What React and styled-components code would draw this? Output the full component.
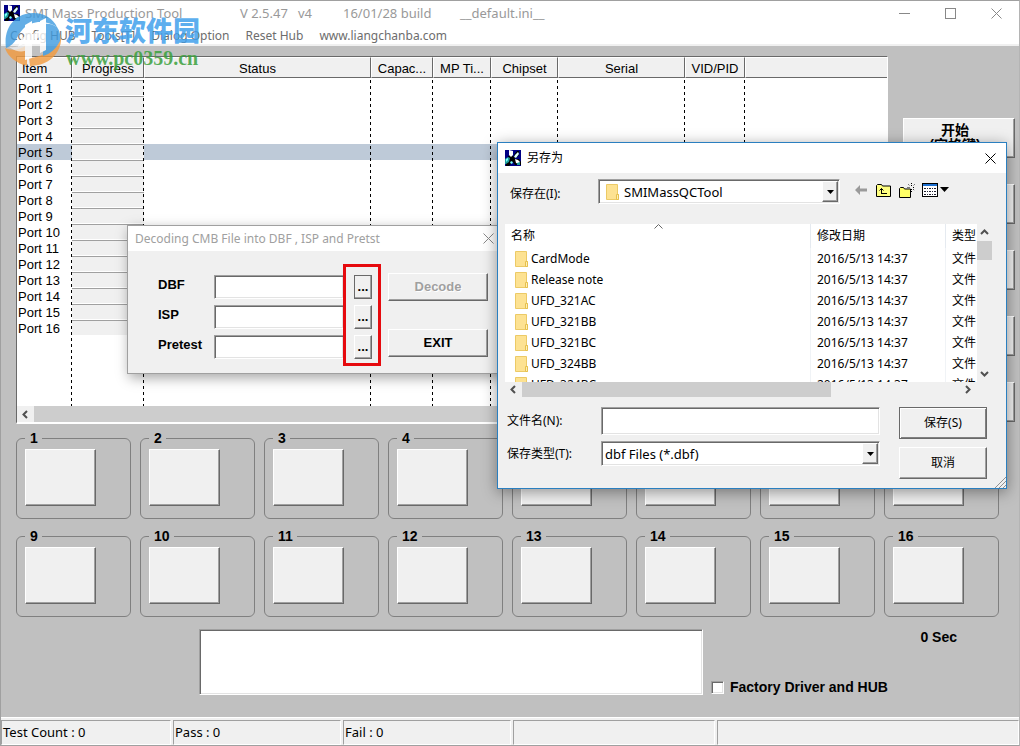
import React from "react";
import styled, { createGlobalStyle, css } from "styled-components";

const GlobalStyle = createGlobalStyle`
  *, *::before, *::after { box-sizing: border-box; }
  body { margin: 0; background: #c0c0c0; }
  button, input, select, textarea { font: inherit; color: inherit; margin: 0; border-radius: 0; outline: none; }
`;

const uiFont = `"Noto Sans", "Noto Sans CJK SC", sans-serif`;
const sysFont = `"Liberation Sans", "Noto Sans CJK SC", sans-serif`;

const raised = css`
  background: #f0f0f0;
  border: 1px solid;
  border-color: #fff #696969 #696969 #fff;
  box-shadow: inset -1px -1px 0 #a0a0a0;
`;
const sunken = css`
  background: #fff;
  border: 1px solid;
  border-color: #a0a0a0 #fff #fff #a0a0a0;
  box-shadow: inset 1px 1px 0 #696969, inset -1px -1px 0 #e3e3e3;
`;

/* ---------- main window ---------- */
const Window = styled.div`
  position: relative;
  display: flex;
  flex-direction: column;
  min-height: 100vh;
  overflow: hidden;
  background: #c0c0c0;
  border: 1px solid #a0a0a0;
  border-right-color: #b4b4b4;
  font: 13px/16px ${sysFont};
  color: #000;
`;
const TitleBar = styled.header`
  display: flex;
  align-items: center;
  height: 24px;
  padding: 0 4px 0 3px;
  background: #fff;
  font: 13px/16px ${uiFont};
  color: #999;
`;
const TitleText = styled.h1`
  display: flex;
  flex: 1;
  margin: 0 0 0 5px;
  font: inherit;
`;
const TitlePart = styled.span`
  flex: none;
  width: ${(p) => p.$w}px;
  white-space: nowrap;
`;
const CaptionButton = styled.button`
  display: flex;
  align-items: center;
  justify-content: center;
  width: ${(p) => p.$w || 46}px;
  height: 24px;
  padding: 0;
  border: 0;
  background: transparent;
`;
const WindowButtons = styled.div`
  display: flex;
  margin-right: -4px;
`;
const MenuBar = styled.nav`
  display: flex;
  gap: 16px;
  height: 21px;
  padding: 3px 9px 0;
  background: #fff;
  border-bottom: 2px solid #f0f0f0;
  font: 12px/16px ${uiFont};
`;
const MenuItem = styled.a`
  color: #6d6d6d;
  text-decoration: none;
`;
const Workspace = styled.main`
  display: flex;
  flex-direction: column;
  padding-top: 10px;
`;
const TopArea = styled.section`
  display: flex;
  padding: 0 4px 0 15px;
`;

/* ---------- port list ---------- */
const ListFrame = styled.div`
  flex: 1;
  min-width: 0;
  background: #fff;
  border: 1px solid;
  border-color: #696969 #fff #fff #696969;
  border-bottom-width: 2px;
`;
const ListBody = styled.div`
  position: relative;
  height: 349px;
  overflow: hidden;
`;
const PortTable = styled.table`
  width: 100%;
  table-layout: fixed;
  border-collapse: separate;
  border-spacing: 0;
`;
const HeadCell = styled.th`
  height: 21px;
  padding: 2px 4px 0;
  overflow: hidden;
  white-space: nowrap;
  font-weight: 400;
  text-align: ${(p) => (p.$left ? "left" : "center")};
  background: #f0f0f0;
  border: 1px solid;
  border-color: #fff #696969 #696969 #fff;
  &:last-child { border-right: 0; }
`;
const SpacerCell = styled.td`
  height: 2px;
  padding: 0;
`;
const PortRow = styled.tr`
  background: ${(p) => (p.$selected ? "#becad8" : "transparent")};
`;
const PortCell = styled.td`
  height: 16px;
  padding: 2px 0 0 1px;
  line-height: 14px;
  white-space: nowrap;
`;
const ProgressCell = styled(PortCell)`
  background: #f0f0f0;
  border-top: 1px solid #a0a0a0;
  border-bottom: 1px solid #fff;
`;
const ColumnLines = styled.div`
  position: absolute;
  inset: 21px 0 0;
  display: flex;
  pointer-events: none;
`;
const ColumnLine = styled.span`
  flex: none;
  width: ${(p) => p.$w}px;
  background: repeating-linear-gradient(to bottom, transparent 0 2px, #000 2px 5px, transparent 5px 6px) right / 1px 100% no-repeat;
`;
const HScroll = styled.div`
  display: flex;
  height: ${(p) => p.$h}px;
  background: #f0f0f0;
`;
const ScrollButton = styled.button`
  display: flex;
  flex: none;
  align-items: center;
  justify-content: center;
  width: ${(p) => p.$w || 17}px;
  height: ${(p) => p.$h || 16}px;
  padding: 0;
  border: 0;
  background: #f0f0f0;
`;
const ScrollThumb = styled.div`
  flex: ${(p) => (p.$len ? "none" : 1)};
  ${(p) => (p.$len ? (p.$vertical ? `height: ${p.$len}px;` : `width: ${p.$len}px;`) : "")}
  background: #cdcdcd;
`;
const ScrollTrack = styled.div`
  flex: 1;
`;

/* ---------- right command column ---------- */
const Commands = styled.div`
  display: flex;
  flex-direction: column;
  gap: 26px;
  width: 112px;
  margin-left: 15px;
  padding-top: 62px;
`;
const CommandButton = styled.button`
  ${raised}
  height: 40px;
  padding: 0 8px 0 0;
  font: bold 14px/15px ${sysFont};
  white-space: pre-line;
`;

/* ---------- port tiles ---------- */
const PortGrid = styled.section`
  display: grid;
  grid-template-columns: repeat(8, 1fr);
  gap: 9px;
  padding: 6px 20px 0 15px;
`;
const PortBox = styled.fieldset`
  min-width: 0;
  height: 89px;
  margin: 0;
  padding: 3px 8px 12px;
  border: 1px solid #808080;
  border-radius: 6px;
`;
const PortLegend = styled.legend`
  padding: 0 4px 0 5px;
  font: bold 14px/16px ${sysFont};
`;
const PortTile = styled.div`
  ${raised}
  width: 71px;
  height: 57px;
`;

/* ---------- lower area ---------- */
const LowerArea = styled.section`
  display: flex;
  gap: 8px;
  padding: 12px 20px 0 198px;
`;
const LogBox = styled.textarea`
  ${sunken}
  width: 504px;
  height: 66px;
  resize: none;
`;
const LowerSide = styled.div`
  display: flex;
  flex: 1;
  flex-direction: column;
  justify-content: space-between;
  font: bold 14px/16px ${sysFont};
`;
const Timer = styled.output`
  align-self: flex-end;
  margin-right: 42px;
`;
const CheckLabel = styled.label`
  display: flex;
  align-items: center;
  gap: 6px;
  white-space: nowrap;
`;
const CheckBox = styled.input`
  ${sunken}
  appearance: none;
  width: 13px;
  height: 13px;
`;
const StatusBar = styled.footer`
  display: grid;
  grid-template-columns: 170px 168px 168px 202px 1fr;
  gap: 2px;
  margin-top: auto;
  padding-top: 2px;
  background: #f0f0f0;
  border-top: 1px solid #fff;
  font: 13px/23px ${uiFont};
`;
const StatusCell = styled.div`
  height: 25px;
  padding-left: 1px;
  border: 1px solid;
  border-color: #a0a0a0 #fff #fff #a0a0a0;
`;

/* ---------- decode dialog ---------- */
const DecodeDialog = styled.section`
  position: absolute;
  left: 126px;
  top: 224px;
  width: 382px;
  background: #f0f0f0;
  border: 1px solid #a0a0a0;
  box-shadow: 2px 4px 12px rgba(0, 0, 0, 0.35);
`;
const DialogTitle = styled.header`
  display: flex;
  align-items: center;
  justify-content: space-between;
  height: ${(p) => p.$h}px;
  padding: 0 ${(p) => p.$right}px 0 7px;
  background: #fff;
  font: 12px/16px ${uiFont};
  color: ${(p) => (p.$inactive ? "#a0a0a0" : "#000")};
`;
const DialogName = styled.h2`
  display: flex;
  align-items: center;
  gap: 6px;
  margin: 0;
  font: inherit;
`;
const DecodeBody = styled.div`
  display: flex;
  align-items: flex-start;
  padding: 13px 19px 7px 30px;
`;
const DecodeFields = styled.div`
  display: grid;
  flex: none;
  grid-template-columns: 56px 129px;
  row-gap: 6px;
  padding-top: 11px;
`;
const FieldLabel = styled.label`
  font: bold 13px/20px ${sysFont};
`;
const PathInput = styled.input`
  ${sunken}
  width: 129px;
  height: 24px;
  border-right: 0;
`;
const BrowseFrame = styled.div`
  display: flex;
  flex: none;
  flex-direction: column;
  gap: 6px;
  width: 38px;
  padding: 8px 6px 4px 8px;
  border: 3px solid #e60a0e;
`;
const BrowseButton = styled.button`
  ${raised}
  width: 18px;
  height: 24px;
  padding: 0;
  font: bold 13px/16px ${sysFont};
  ${(p) => p.$active && css`border-color: #696969;`}
`;
const DecodeActions = styled.div`
  display: flex;
  flex: none;
  flex-direction: column;
  gap: 28px;
  padding: 9px 0 0 7px;
`;
const ActionButton = styled.button`
  ${raised}
  width: 100px;
  height: 28px;
  padding: 0;
  font: bold 13px/16px ${sysFont};
  &:disabled { color: #a0a0a0; text-shadow: 1px 1px 0 #fff; }
`;

/* ---------- save dialog ---------- */
const SaveDialog = styled.section`
  position: absolute;
  left: 496px;
  top: 141px;
  width: 510px;
  background: #f0f0f0;
  border: 1px solid #2a7fc0;
  box-shadow: 0 3px 14px rgba(0, 0, 0, 0.4);
  font: 12px/16px ${uiFont};
`;
const LocationRow = styled.div`
  display: flex;
  align-items: center;
  padding: 6px 0 0 12px;
`;
const RowLabel = styled.label`
  flex: none;
  width: ${(p) => p.$w}px;
  white-space: nowrap;
`;
const LocationLabel = styled(RowLabel)`
  padding-top: 4px;
`;
const Combo = styled.div`
  ${sunken}
  display: flex;
  align-items: center;
  gap: 5px;
  width: ${(p) => p.$w}px;
  height: 25px;
  padding: 1px 1px 1px ${(p) => p.$pad}px;
`;
const ComboSelect = styled.select`
  appearance: none;
  flex: 1;
  min-width: 0;
  padding: 0;
  border: 0;
  background: transparent;
  font-size: 13px;
`;
const ComboArrow = styled.span`
  ${raised}
  display: flex;
  align-items: center;
  justify-content: center;
  align-self: stretch;
  width: 16px;
  pointer-events: none;
`;
const ToolButtons = styled.div`
  display: flex;
  gap: 7px;
  margin: -3px 0 0 15px;
`;
const ToolButton = styled.button`
  display: flex;
  padding: 0;
  border: 0;
  background: transparent;
`;
const FileArea = styled.div`
  margin: 20px 14px 0 7px;
`;
const FileView = styled.div`
  display: flex;
  height: 158px;
  overflow: hidden;
`;
const FileTable = styled.table`
  flex: 1;
  align-self: flex-start;
  table-layout: fixed;
  width: 100%;
  background: #fff;
  border-collapse: separate;
  border-spacing: 0;
`;
const FileHead = styled.th`
  position: relative;
  height: 24px;
  padding: 0 0 0 6px;
  font-weight: 400;
  text-align: left;
  white-space: nowrap;
  overflow: hidden;
  & + & { border-left: 1px solid #e5eaf0; }
`;
const SortMark = styled.span`
  position: absolute;
  left: 50%;
  top: 0;
  margin-left: -4px;
  line-height: 0;
`;
const FileCell = styled.td`
  height: 21px;
  padding: 0 0 0 6px;
  white-space: nowrap;
  overflow: hidden;
  & + & { border-left: 1px solid #f0f3f6; }
`;
const FileName = styled.span`
  display: flex;
  align-items: center;
  gap: 3px;
  height: 21px;
  padding-left: 4px;
`;
const VScroll = styled.div`
  display: flex;
  flex: none;
  flex-direction: column;
  width: 15px;
`;
const SaveForm = styled.div`
  display: grid;
  grid-template-columns: 373px 107px;
  padding: 10px 0 9px 9px;
`;
const SaveFields = styled.div`
  display: grid;
  grid-template-columns: 94px 279px;
  align-content: start;
  align-items: center;
  row-gap: 6px;
`;
const NameInput = styled.input`
  ${sunken}
  width: 279px;
  height: 28px;
`;
const SaveActions = styled.div`
  display: flex;
  flex-direction: column;
  gap: 8px;
  margin-left: 19px;
`;
const SaveButton = styled.button`
  ${raised}
  width: 88px;
  height: 32px;
  padding: 0;
  ${(p) => p.$default && css`border-color: #696969; box-shadow: inset 1px 1px 0 #fff, inset -1px -1px 0 #808080;`}
`;
const Grip = styled.span`
  position: absolute;
  right: 0;
  bottom: 0;
  line-height: 0;
`;

/* ---------- site mark ---------- */
const SiteMark = styled.div`
  position: absolute;
  left: 3px;
  top: 11px;
  display: flex;
  align-items: flex-start;
  pointer-events: none;
`;
const SiteText = styled.div`
  display: flex;
  flex-direction: column;
  margin-left: 3px;
  padding-top: 2px;
`;
const SiteName = styled.span`
  font: 900 27px/32px "Noto Sans CJK SC", sans-serif;
  color: rgba(64, 160, 236, 0.85);
`;
const SiteUrl = styled.span`
  padding-left: 1px;
  font: bold 20px/24px "Liberation Serif", serif;
  color: rgba(58, 160, 60, 0.85);
`;

/* ---------- drawings ---------- */
const AppIcon = () => (
  <svg width="16" height="16" viewBox="0 0 16 16" aria-hidden="true">
    <rect width="16" height="16" fill="#000084" />
    <path d="M3 6l4-1 3 3-2 4-4 4H1v-3l3-4zM9 5l3-4h2v4l-3 3H9zM8 9h6l2 3v3h-6l-2-3z" fill="#000" />
    <path d="M4 0l4 1v4L6 7 4 5z" fill="#fff" />
    <path d="M13 2l1 2-3 4-2-1 1-2z" fill="#dff" />
    <path d="M0 9l3-2 2 1-1 4-3 2H0z" fill="#1f9c9c" />
    <path d="M1 9l2-1v2l-2 2zM5 12l2-1 1 2-2 1z" fill="#7ff" />
    <path d="M10 9l3 1 2 2-1 2-3-1z" fill="#fff" />
    <path d="M12 13l3-1v3h-3z" fill="#1f9c9c" />
  </svg>
);
const Cross = ({ color = "#888" }) => (
  <svg width="11" height="11" viewBox="0 0 11 11" aria-hidden="true">
    <path d="M.5.5l10 10M10.500 .5l-10 10" stroke={color} fill="none" />
  </svg>
);
const Chevron = ({ dir }) => {
  const d = { left: "M6 1L2.500 4.500 6 8", right: "M3 1l3.500 3.500L3 8", up: "M1 6l3.500-3.500L8 6", down: "M1 3l3.500 3.500L8 3" }[dir];
  return (
    <svg width="9" height="9" viewBox="0 0 9 9" aria-hidden="true">
      <path d={d} stroke="#505050" strokeWidth="2" fill="none" />
    </svg>
  );
};
const Triangle = () => (
  <svg width="7" height="4" viewBox="0 0 7 4" aria-hidden="true">
    <path d="M0 0h7L3.500 4z" fill="#000" />
  </svg>
);
const Folder = () => (
  <svg width="13" height="16" viewBox="0 0 13 16" aria-hidden="true">
    <path d="M.5.500h11v10h1v5h-12z" fill="#fde292" stroke="#ecca66" />
    <path d="M10.500 10.500h2v5h-2z" fill="#fff0b4" stroke="#e6c04e" />
  </svg>
);
const BackIcon = () => (
  <svg width="14" height="16" viewBox="0 0 14 16" aria-hidden="true">
    <path d="M0 8l5-5v3.500h7v3H5V13z" fill="#9a9a9a" />
  </svg>
);
const UpFolderIcon = () => (
  <svg width="16" height="16" viewBox="0 0 16 16" aria-hidden="true">
    <path d="M.5 14.500v-11l1-1h4l1 1.500h8v10.500z" fill="#ffff80" stroke="#000" />
    <path d="M5.500 11V6.500M3.500 8.500l2-2 2 2M5 11.500h6" stroke="#000" fill="none" />
  </svg>
);
const NewFolderIcon = () => (
  <svg width="16" height="16" viewBox="0 0 16 16" aria-hidden="true">
    <path d="M.5 15.500v-9l1-1h3l1 1.500h6v8.500z" fill="#ffff66" stroke="#000" />
    <path d="M12.500 1v3M12.500 7v3M8.500 5.500h2.500M14 5.500h2M9.500 2.500l1.500 1.500M14 7l1.500 1.500M15.500 2.500L14 4" stroke="#000" strokeDasharray="1 1" fill="none" />
  </svg>
);
const ViewIcon = () => (
  <svg width="28" height="16" viewBox="0 0 28 16" aria-hidden="true">
    <rect x=".5" y="1.500" width="15" height="13" fill="#fff" stroke="#000" />
    <rect x="1" y="2" width="14" height="2" fill="#1c6fd0" />
    <path d="M2 6.500h2M5 6.500h1M7 6.500h2M10 6.500h1M12 6.500h2M2 9.500h2M5 9.500h1M7 9.500h2M10 9.500h1M12 9.500h2M2 12.500h2M5 12.500h1M7 12.500h2M10 12.500h1M12 12.500h2" stroke="#223" />
    <path d="M18 5h9l-4.500 5z" fill="#000" />
  </svg>
);
const SiteLogo = () => (
  <svg width="58" height="56" viewBox="0 0 58 56" opacity="0.8" aria-hidden="true">
    <path d="M2 36C-1 15 12 1 29 1c12 0 20 6 24 14C42 8 28 8 19 17 12 24 13 32 2 36z" fill="#3d9be0" />
    <path d="M1 36c7 3 15 2 22-3v21C12 51 4 45 1 36z" fill="#f29a3e" />
    <path d="M57 22c2 18-11 32-31 32l-1-8c16-1 27-10 32-24z" fill="#f29a3e" />
    <path d="M53 15c3 4 4 10 3 14-4 8-10 13-17 15V12c5-1 10 0 14 3z" fill="#3d9be0" />
    <path d="M21 13l7-4v13l8-4V9l6-3v32l-6 3V25l-8 4v17l-7 2V31l-7 4 3-8 4-3z" fill="#fff" />
    <path d="M5 35c10 1 18-3 25-9-3 13-12 18-25 9z" fill="#fff" fillOpacity=".7" />
  </svg>
);

/* ---------- data ---------- */
const columns = [
  ["Item", 55], ["Progress", 72], ["Status", 227], ["Capac...", 62], ["MP Ti...", 58],
  ["Chipset", 67], ["Serial", 127], ["VID/PID", 60], ["", null],
];
const ports = Array.from({ length: 16 }, (_, i) => i + 1);
const menu = ["Config HUB", "Tools[T]", "Dialog Option", "Reset Hub", "www.liangchanba.com"];
const folders = ["CardMode", "Release note", "UFD_321AC", "UFD_321BB", "UFD_321BC", "UFD_324BB", "UFD_324BC"];
const decodeFields = ["DBF", "ISP", "Pretest"];

function PortList() {
  return (
    <ListFrame>
      <ListBody>
        <PortTable>
          <colgroup>
            {columns.map(([name, w]) => <col key={name} width={w || undefined} />)}
          </colgroup>
          <thead>
            <tr>
              {columns.map(([name], i) => <HeadCell key={name} $left={i === 0}>{name}</HeadCell>)}
            </tr>
          </thead>
          <tbody>
            <tr><SpacerCell colSpan={9} /></tr>
            {ports.map((n) => (
              <PortRow key={n} $selected={n === 5}>
                <PortCell>Port {n}</PortCell>
                <ProgressCell />
                <PortCell colSpan={7} />
              </PortRow>
            ))}
          </tbody>
        </PortTable>
        <ColumnLines>
          {columns.slice(0, 8).map(([name, w]) => <ColumnLine key={name} $w={w} />)}
        </ColumnLines>
      </ListBody>
      <HScroll $h={16}>
        <ScrollButton aria-label="Scroll left"><Chevron dir="left" /></ScrollButton>
        <ScrollThumb />
        <ScrollButton aria-label="Scroll right"><Chevron dir="right" /></ScrollButton>
      </HScroll>
    </ListFrame>
  );
}

function Decode() {
  return (
    <DecodeDialog>
      <DialogTitle $h={25} $right={14} $inactive>
        <DialogName>Decoding CMB File into DBF , ISP and Pretst</DialogName>
        <CaptionButton $w={12} aria-label="Close"><Cross /></CaptionButton>
      </DialogTitle>
      <DecodeBody>
        <DecodeFields>
          {decodeFields.map((f) => (
            <React.Fragment key={f}>
              <FieldLabel htmlFor={`path-${f}`}>{f}</FieldLabel>
              <PathInput id={`path-${f}`} />
            </React.Fragment>
          ))}
        </DecodeFields>
        <BrowseFrame>
          {decodeFields.map((f, i) => (
            <BrowseButton key={f} $active={i === 0}>...</BrowseButton>
          ))}
        </BrowseFrame>
        <DecodeActions>
          <ActionButton disabled>Decode</ActionButton>
          <ActionButton>EXIT</ActionButton>
        </DecodeActions>
      </DecodeBody>
    </DecodeDialog>
  );
}

function SaveAs() {
  return (
    <SaveDialog>
      <DialogTitle $h={30} $right={10}>
        <DialogName><AppIcon />另存为</DialogName>
        <CaptionButton $w={12} aria-label="Close"><Cross color="#000" /></CaptionButton>
      </DialogTitle>
      <LocationRow>
        <LocationLabel htmlFor="save-in" $w={88}>保存在(I):</LocationLabel>
        <Combo $w={242} $pad={7}>
          <Folder />
          <ComboSelect id="save-in"><option>SMIMassQCTool</option></ComboSelect>
          <ComboArrow><Triangle /></ComboArrow>
        </Combo>
        <ToolButtons>
          <ToolButton aria-label="Back"><BackIcon /></ToolButton>
          <ToolButton aria-label="Up one level"><UpFolderIcon /></ToolButton>
          <ToolButton aria-label="New folder"><NewFolderIcon /></ToolButton>
          <ToolButton aria-label="View"><ViewIcon /></ToolButton>
        </ToolButtons>
      </LocationRow>
      <FileArea>
        <FileView>
          <FileTable>
            <colgroup><col width="305" /><col width="135" /><col /></colgroup>
            <thead>
              <tr>
                <FileHead>名称<SortMark>
                  <svg width="9" height="5" viewBox="0 0 9 5" aria-hidden="true"><path d="M.5 4.500l4-4 4 4" stroke="#666" fill="none" /></svg>
                </SortMark></FileHead>
                <FileHead>修改日期</FileHead>
                <FileHead>类型</FileHead>
              </tr>
            </thead>
            <tbody>
              {folders.map((name) => (
                <tr key={name}>
                  <FileCell><FileName><Folder />{name}</FileName></FileCell>
                  <FileCell>2016/5/13 14:37</FileCell>
                  <FileCell>文件</FileCell>
                </tr>
              ))}
            </tbody>
          </FileTable>
          <VScroll>
            <ScrollButton $w={15} $h={17} aria-label="Scroll up"><Chevron dir="up" /></ScrollButton>
            <ScrollThumb $vertical $len={19} />
            <ScrollTrack />
            <ScrollButton $w={15} $h={17} aria-label="Scroll down"><Chevron dir="down" /></ScrollButton>
          </VScroll>
        </FileView>
        <HScroll $h={15}>
          <ScrollButton $h={15} aria-label="Scroll left"><Chevron dir="left" /></ScrollButton>
          <ScrollThumb $len={309} />
          <ScrollTrack />
          <ScrollButton $w={49} $h={15} aria-label="Scroll right"><Chevron dir="right" /></ScrollButton>
        </HScroll>
      </FileArea>
      <SaveForm>
        <SaveFields>
          <RowLabel htmlFor="file-name">文件名(N):</RowLabel>
          <NameInput id="file-name" />
          <RowLabel htmlFor="file-type">保存类型(T):</RowLabel>
          <Combo $w={279} $pad={3}>
            <ComboSelect id="file-type"><option>dbf Files (*.dbf)</option></ComboSelect>
            <ComboArrow><Triangle /></ComboArrow>
          </Combo>
        </SaveFields>
        <SaveActions>
          <SaveButton $default>保存(S)</SaveButton>
          <SaveButton>取消</SaveButton>
        </SaveActions>
      </SaveForm>
      <Grip>
        <svg width="12" height="12" viewBox="0 0 12 12" aria-hidden="true">
          <path d="M1 12L12 1M5 12l7-7M9 12l3-3" stroke="#909090" fill="none" />
        </svg>
      </Grip>
    </SaveDialog>
  );
}

export default function App() {
  return (
    <>
      <GlobalStyle />
      <Window>
        <TitleBar>
          <AppIcon />
          <TitleText>
            <TitlePart $w={215}>SMI Mass Production Tool</TitlePart>
            <TitlePart $w={58}>V 2.5.47</TitlePart>
            <TitlePart $w={45}>v4</TitlePart>
            <TitlePart $w={117}>16/01/28 build</TitlePart>
            <TitlePart $w={90}>__default.ini__</TitlePart>
          </TitleText>
          <WindowButtons>
            <CaptionButton aria-label="Minimize">
              <svg width="11" height="11" aria-hidden="true"><path d="M0 5.500h11" stroke="#888" /></svg>
            </CaptionButton>
            <CaptionButton aria-label="Maximize">
              <svg width="11" height="11" aria-hidden="true"><rect x=".5" y=".5" width="10" height="10" fill="none" stroke="#888" /></svg>
            </CaptionButton>
            <CaptionButton aria-label="Close"><Cross /></CaptionButton>
          </WindowButtons>
        </TitleBar>
        <MenuBar>
          {menu.map((m) => <MenuItem key={m} href="#">{m}</MenuItem>)}
        </MenuBar>
        <Workspace>
          <TopArea>
            <PortList />
            <Commands>
              <CommandButton>{"开始\n(空格键)"}</CommandButton>
              <CommandButton aria-label="Scan" />
              <CommandButton aria-label="Setting" />
              <CommandButton aria-label="Debug" />
              <CommandButton aria-label="Quit" />
            </Commands>
          </TopArea>
          <PortGrid>
            {ports.map((n) => (
              <PortBox key={n}>
                <PortLegend>{n}</PortLegend>
                <PortTile />
              </PortBox>
            ))}
          </PortGrid>
          <LowerArea>
            <LogBox aria-label="Log" />
            <LowerSide>
              <Timer>0 Sec</Timer>
              <CheckLabel><CheckBox type="checkbox" />Factory Driver and HUB</CheckLabel>
            </LowerSide>
          </LowerArea>
        </Workspace>
        <StatusBar>
          <StatusCell>Test Count : 0</StatusCell>
          <StatusCell>Pass : 0</StatusCell>
          <StatusCell>Fail : 0</StatusCell>
          <StatusCell />
          <StatusCell />
        </StatusBar>
        <Decode />
        <SaveAs />
        <SiteMark>
          <SiteLogo />
          <SiteText>
            <SiteName>河东软件园</SiteName>
            <SiteUrl>www.pc0359.cn</SiteUrl>
          </SiteText>
        </SiteMark>
      </Window>
    </>
  );
}
